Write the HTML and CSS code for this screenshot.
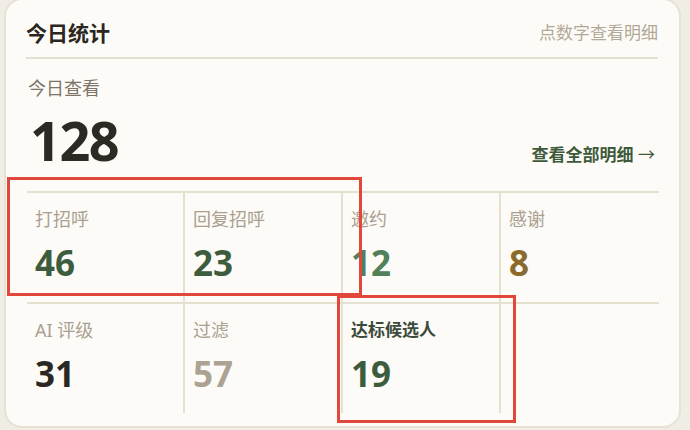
FILE: index.html
```html
<!DOCTYPE html>
<html lang="zh-CN">
<head>
    <meta charset="UTF-8">
    <meta name="viewport" content="width=device-width, initial-scale=1.0">
    <title>今日统计</title>
    <link rel="stylesheet" href="styles.css">
</head>
<body>
    <div class="card">
        <div class="card-header">
            <h2 class="card-title">今日统计</h2>
            <span class="card-hint">点数字查看明细</span>
        </div>

        <div class="summary">
            <div class="summary-label">今日查看</div>
            <div class="summary-row">
                <span class="summary-value">128</span>
                <a class="summary-link" href="#">查看全部明细 <span class="arrow">→</span></a>
            </div>
        </div>

        <div class="stats">
            <div class="stat">
                <div class="stat-label">打招呼</div>
                <div class="stat-value green">46</div>
            </div>
            <div class="stat">
                <div class="stat-label">回复招呼</div>
                <div class="stat-value green">23</div>
            </div>
            <div class="stat">
                <div class="stat-label">邀约</div>
                <div class="stat-value light-green">12</div>
            </div>
            <div class="stat last">
                <div class="stat-label">感谢</div>
                <div class="stat-value brown">8</div>
            </div>

            <div class="stat">
                <div class="stat-label">AI 评级</div>
                <div class="stat-value dark">31</div>
            </div>
            <div class="stat">
                <div class="stat-label">过滤</div>
                <div class="stat-value muted">57</div>
            </div>
            <div class="stat">
                <div class="stat-label strong">达标候选人</div>
                <div class="stat-value green">19</div>
            </div>
            <div class="stat last"></div>
        </div>
    </div>

    <!-- highlight frames -->
    <div class="mark mark-reach"></div>
    <div class="mark mark-qualified"></div>
</body>
</html>
```

FILE: styles.css
```css
body {
    font-family: "Noto Sans", "Noto Sans CJK SC", sans-serif;
    background-color: #f0ede5;
    margin: 0;
    padding: 0 9px 0 4px;
    width: 690px;
    height: 430px;
    box-sizing: border-box;
    overflow: hidden;
    position: relative;
}

.card {
    margin-top: -2px;
    background: #fcfbf7;
    border: 2px solid #e7e2d5;
    border-radius: 18px;
    padding: 20px 20px 13px 21px;
}

.card-header {
    display: flex;
    align-items: center;
    justify-content: space-between;
    margin: 0 1px 0 -1px;
    padding-bottom: 11px;
    border-bottom: 2px solid #e6e0d1;
}

.card-title {
    margin: 0;
    font-size: 21px;
    line-height: 26px;
    font-weight: bold;
    color: #2b2620;
}

.card-hint {
    font-size: 17px;
    line-height: 26px;
    color: #b2a898;
}

.summary {
    padding: 17px 4px 0 1px;
    margin-bottom: 23px;
}

.summary-label {
    font-size: 18px;
    line-height: 24px;
    color: #7d7367;
}

.summary-row {
    display: flex;
    align-items: baseline;
    justify-content: space-between;
    margin-top: 13px;
}

.summary-value {
    padding-left: 2px;
    font-size: 54px;
    line-height: 55px;
    font-weight: bold;
    letter-spacing: -1.5px;
    color: #2d2a24;
}

.summary-link {
    font-size: 17px;
    font-weight: bold;
    color: #3e5a3a;
    text-decoration: none;
}

.summary-link .arrow {
    font-weight: normal;
}

.stats {
    display: grid;
    grid-template-columns: repeat(4, 1fr);
}

.stat {
    border-top: 2px solid #e6e0d1;
    border-right: 2px solid #e6e0d1;
    padding: 14px 8px 22px;
    min-height: 73px;
}

.stat.last {
    border-right: none;
}

.stat-label {
    font-size: 18px;
    line-height: 24px;
    color: #aa9f90;
}

.stat-label.strong {
    font-size: 17px;
    font-weight: bold;
    color: #3c4a3a;
}

.stat-value {
    margin-top: 14px;
    font-size: 35px;
    line-height: 35px;
    font-weight: bold;
}

.green { color: #3d5b3d; }
.light-green { color: #52805a; }
.brown { color: #8b6a2b; }
.dark { color: #2b2722; }
.muted { color: #aba293; }

.mark {
    position: absolute;
    border: 3px solid #e2473c;
    box-sizing: border-box;
}

.mark-reach {
    left: 7px;
    top: 177px;
    width: 355px;
    height: 119px;
}

.mark-qualified {
    left: 337px;
    top: 295px;
    width: 179px;
    height: 128px;
}
```
